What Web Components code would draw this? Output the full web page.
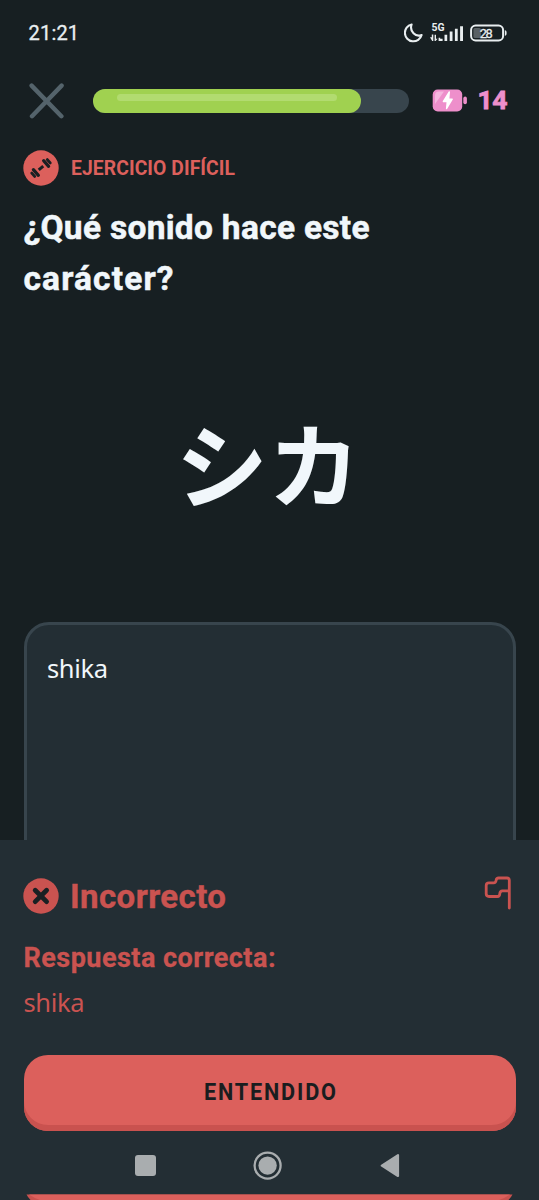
<!DOCTYPE html>
<html lang="es">
<head>
<meta charset="utf-8">
<meta name="viewport" content="width=device-width, initial-scale=1">
<title>Ejercicio</title>
<style>
    html, body {
        margin: 0;
        height: 100%;
        background: #171f22;
    }
    body {
        overflow: hidden;
        font-family: Roboto, "Noto Sans", "Noto Sans CJK JP", sans-serif;
    }
</style>
</head>
<body>
<lesson-screen>
    <status-bar slot="status" time="21:21" battery="28"></status-bar>
    <lesson-header slot="header" energy="14"></lesson-header>
    <exercise-prompt>
        <fit-text slot="tag" width="164" squeeze="0.92">EJERCICIO DIFÍCIL</fit-text>
        <fit-text slot="title" width="346">¿Qué sonido hace este</fit-text>
        <fit-text slot="title" width="150">carácter?</fit-text>
        <span slot="character">シカ</span>
    </exercise-prompt>
    <answer-box><fit-text width="61">shika</fit-text></answer-box>
    <result-sheet slot="sheet">
        <fit-text slot="heading" width="156">Incorrecto</fit-text>
        <fit-text slot="label" width="252">Respuesta correcta:</fit-text>
        <fit-text slot="answer" width="61">shika</fit-text>
        <push-button><fit-text width="132" squeeze="0.93">ENTENDIDO</fit-text></push-button>
    </result-sheet>
    <nav-bar slot="nav"></nav-bar>
</lesson-screen>

<script>
// One line of text, tracked so that it fills `width` pixels.
// `squeeze` narrows the letters themselves.
class FitText extends HTMLElement {
    constructor() {
        super();
        this.attachShadow({ mode: 'open' });
    }

    connectedCallback() {
        this.shadowRoot.innerHTML = `
            <style>
                :host { display: block; white-space: nowrap; }
                span { display: inline-block; transform-origin: 0 50%; }
            </style>
            <span><slot></slot></span>
        `;
        requestAnimationFrame(() => this.fit());
        this.fit();
    }

    fit() {
        const span = this.shadowRoot.querySelector('span');
        const squeeze = Number(this.getAttribute('squeeze')) || 1;
        const width = Number(this.getAttribute('width'));
        span.style.letterSpacing = '0px';
        span.style.marginRight = '0px';
        span.style.transform = 'none';
        const natural = span.getBoundingClientRect().width;
        const count = this.textContent.length;
        if (!natural || !count) return;
        const gap = (width / squeeze - natural) / (count - 1);
        span.style.letterSpacing = `${gap}px`;
        span.style.marginRight = `${width - width / squeeze - gap}px`;
        if (squeeze !== 1) span.style.transform = `scaleX(${squeeze})`;
    }
}

class LessonScreen extends HTMLElement {
    constructor() {
        super();
        this.attachShadow({ mode: 'open' });
    }

    connectedCallback() {
        this.shadowRoot.innerHTML = `
            <style>
                :host {
                    display: flex;
                    flex-direction: column;
                    width: 539px;
                    height: 1200px;
                    overflow: hidden;
                    color: #f1f7fb;
                    background: #171f22;
                }
                main {
                    height: 704px;
                    flex: none;
                    overflow: hidden;
                    padding: 0 23.5px;
                }
                footer {
                    flex: 1;
                    display: flex;
                    flex-direction: column;
                    background: #232e34;
                }
            </style>
            <slot name="status"></slot>
            <slot name="header"></slot>
            <main><slot></slot></main>
            <footer><slot name="sheet"></slot><slot name="nav"></slot></footer>
        `;
    }
}

class StatusBar extends HTMLElement {
    constructor() {
        super();
        this.attachShadow({ mode: 'open' });
    }

    connectedCallback() {
        this.shadowRoot.innerHTML = `
            <style>
                :host {
                    display: flex;
                    align-items: center;
                    height: 66px;
                    flex: none;
                    padding: 0 32px 0 28.5px;
                    box-sizing: border-box;
                    color: #e9eef0;
                }
                .time {
                    flex: 1;
                    font-size: 20px;
                    line-height: 24px;
                    letter-spacing: 0.2px;
                    -webkit-text-stroke: 0.3px;
                }
                svg { display: block; }
                .moon { margin-right: 7px; }
                .signal { margin-right: 6px; }
            </style>
            <span class="time">${this.getAttribute('time')}</span>
            <svg class="moon" width="19" height="20" viewBox="0 0 19 20" fill="none" stroke="currentColor" stroke-width="2.1" stroke-linejoin="round">
                <path d="M7.6 1.5A8.5 8.5 0 1 0 17.6 12C11.7 14.5 5.2 8.2 7.6 1.5Z"/>
            </svg>
            <svg class="signal" width="34" height="20" viewBox="0 0 34 20" fill="currentColor">
                <text x="1.6" y="8.4" font-size="10" font-weight="700" textLength="13" lengthAdjust="spacingAndGlyphs">5G</text>
                <path d="M0 14.2h1.8V11.5h1.5V18H2.2zM4.6 11.8h1.4v4h1.6L5.6 18h-1zM8.6 14.8h1.6v1h2.4V18h-4zM14.5 11.7h2.7V18h-2.7zM19.7 8.5h2.8V18h-2.8zM24.9 5.8h2.8V18h-2.8zM30.1 3.2H33V18h-2.9z"/>
            </svg>
            <svg width="37" height="18" viewBox="0 0 37 18">
                <rect x="3.4" y="4" width="7.5" height="10" rx="1.5" fill="#596064"/>
                <rect x="1.1" y="1.6" width="32" height="14.8" rx="4.5" fill="none" stroke="currentColor" stroke-width="2"/>
                <path d="M34.9 6.3c1.2 0 1.7.9 1.7 2.7s-.5 2.7-1.7 2.7z" fill="currentColor"/>
                <text x="16.3" y="13.6" font-size="12.8" text-anchor="middle" fill="currentColor" stroke="currentColor" stroke-width=".3" textLength="13">${this.getAttribute('battery')}</text>
            </svg>
        `;
    }
}

class LessonHeader extends HTMLElement {
    constructor() {
        super();
        this.attachShadow({ mode: 'open' });
    }

    connectedCallback() {
        this.shadowRoot.innerHTML = `
            <style>
                :host {
                    display: flex;
                    align-items: center;
                    height: 70px;
                    flex: none;
                    padding: 0 32px 0 29px;
                    box-sizing: border-box;
                }
                svg { display: block; flex: none; }
                .track {
                    width: 316px;
                    height: 23.5px;
                    margin: 0 23px 0 29px;
                    border-radius: 12px;
                    background: #38454d;
                }
                .fill {
                    width: 268px;
                    height: 100%;
                    box-sizing: border-box;
                    padding: 5px 24px 0;
                    border-radius: 12px;
                    background: #a0d150;
                }
                .shine {
                    height: 7px;
                    border-radius: 4px;
                    background: #b2db70;
                }
                .energy {
                    flex: 1;
                    text-align: right;
                    font-size: 26.5px;
                    font-weight: 700;
                    line-height: 32px;
                    padding-bottom: 2px;
                    letter-spacing: -0.5px;
                    color: #ee8fcb;
                    -webkit-text-stroke: 0.8px;
                }
            </style>
            <svg width="35" height="36" viewBox="0 0 35 36" stroke="#54636b" stroke-width="4.4" stroke-linecap="round">
                <path d="M2.6 2.6 32.4 33.2M32.6 2.6 3 33.2"/>
            </svg>
            <div class="track"><div class="fill"><div class="shine"></div></div></div>
            <svg width="36" height="24" viewBox="0 0 36 24">
                <rect x=".7" y=".5" width="29.5" height="22" rx="5" fill="#ee8fcb"/>
                <path d="M7 2.5h5L3 15V6.5a4 4 0 0 1 4-4z" fill="#f5b6de"/>
                <rect x="31.3" y="7.6" width="3.6" height="7.6" rx="1.8" fill="#ee8fcb"/>
                <path d="M16.7 2.6 10.8 12.1a.8.8 0 0 0 .7 1.2h3l-.6 6.2c-.1.9.7 1.1 1.2.4l5.7-9.3a.8.8 0 0 0-.7-1.2h-2.7L18 3c0-.9-.8-1.1-1.3-.4z" fill="#fff"/>
            </svg>
            <span class="energy">${this.getAttribute('energy')}</span>
        `;
    }
}

class ExercisePrompt extends HTMLElement {
    constructor() {
        super();
        this.attachShadow({ mode: 'open' });
    }

    connectedCallback() {
        this.shadowRoot.innerHTML = `
            <style>
                :host { display: block; height: 486px; }
                .tag {
                    display: flex;
                    align-items: center;
                    gap: 11.5px;
                    height: 64px;
                    font-size: 21px;
                    font-weight: 700;
                    line-height: 28px;
                    color: #dc605c;
                }
                .tag svg { margin-left: -0.5px; }
                .title {
                    padding-top: 2px;
                    font-size: 33.5px;
                    font-weight: 700;
                    line-height: 51px;
                    -webkit-text-stroke: 0.5px;
                }
                .character {
                    padding-top: 87px;
                    margin-left: -3px;
                    text-align: center;
                    font: 700 92.5px/140px "Noto Sans CJK JP", sans-serif;
                }
            </style>
            <div class="tag">
                <svg width="36" height="36" viewBox="0 0 36 36">
                    <circle cx="18" cy="18" r="17.7" fill="#dc605c"/>
                    <g transform="rotate(-41 18 18)" stroke="#1a2023" stroke-linecap="round">
                        <path d="M15 18h6" stroke-width="3" stroke-linecap="butt"/>
                        <path d="M11.2 14.2v7.6M24.8 14.2v7.6" stroke-width="3.2"/>
                        <path d="M7.7 15.8v4.4M28.3 15.8v4.4" stroke-width="2.9"/>
                    </g>
                </svg>
                <slot name="tag"></slot>
            </div>
            <div class="title"><slot name="title"></slot></div>
            <div class="character"><slot name="character"></slot></div>
        `;
    }
}

class AnswerBox extends HTMLElement {
    constructor() {
        super();
        this.attachShadow({ mode: 'open' });
    }

    connectedCallback() {
        this.shadowRoot.innerHTML = `
            <style>
                :host {
                    display: block;
                    box-sizing: border-box;
                    height: 300px;
                    padding: 26px 20.5px;
                    border: 3px solid #38454d;
                    border-radius: 25px;
                    background: #232e34;
                    font-family: "Noto Sans", sans-serif;
                    font-size: 25.5px;
                    line-height: 34px;
                }
            </style>
            <slot></slot>
        `;
    }
}

class ResultSheet extends HTMLElement {
    constructor() {
        super();
        this.attachShadow({ mode: 'open' });
    }

    connectedCallback() {
        this.shadowRoot.innerHTML = `
            <style>
                :host {
                    display: block;
                    box-sizing: border-box;
                    height: 291px;
                    padding: 36px 23.5px 0;
                    color: #ca5350;
                }
                .head {
                    display: flex;
                    align-items: center;
                    height: 40px;
                }
                .badge { margin-left: -0.5px; }
                .flag { margin-right: 1px; }
                .heading {
                    flex: 1;
                    padding: 2px 0 0 11px;
                    font-size: 33px;
                    font-weight: 700;
                    line-height: 40px;
                    -webkit-text-stroke: 0.4px;
                }
                .label {
                    padding-top: 24px;
                    font-size: 27px;
                    font-weight: 700;
                    line-height: 36px;
                    -webkit-text-stroke: 0.3px;
                }
                .answer {
                    padding: 8px 0 35px;
                    font-family: "Noto Sans", sans-serif;
                    font-size: 25.5px;
                    line-height: 36px;
                }
            </style>
            <div class="head">
                <svg class="badge" width="36" height="36" viewBox="0 0 36 36">
                    <circle cx="18" cy="18" r="17.7" fill="#ca5350"/>
                    <path d="M12.2 12.2 23.6 23.6M23.6 12.2 12.2 23.6" stroke="#1a2023" stroke-width="4.8" stroke-linecap="round"/>
                </svg>
                <div class="heading"><slot name="heading"></slot></div>
                <svg class="flag" width="31" height="40" viewBox="0 0 31 40" fill="none" stroke="#ca5350" stroke-width="2.8" stroke-linecap="round" stroke-linejoin="round">
                    <path d="M25.3 32V4.3Q25.3 2 23 2H14.6Q12.4 2 12.1 4.4T9.6 6.8H5Q2.2 6.8 2.2 9.6V17.8Q2.2 20.5 5 20.5H13.5Q15.7 20.5 15.8 17.7T18.4 14.8H25"/>
                </svg>
            </div>
            <div class="label"><slot name="label"></slot></div>
            <div class="answer"><slot name="answer"></slot></div>
            <slot></slot>
        `;
    }
}

class PushButton extends HTMLElement {
    constructor() {
        super();
        this.attachShadow({ mode: 'open' });
    }

    connectedCallback() {
        this.shadowRoot.innerHTML = `
            <style>
                :host {
                    display: flex;
                    justify-content: center;
                    align-items: center;
                    box-sizing: border-box;
                    height: 76px;
                    padding-bottom: 2px;
                    border-radius: 24px;
                    background: #dc605c;
                    box-shadow: inset 0 -6px #c9524f;
                    color: #1a1d1f;
                    font-size: 23.3px;
                    font-weight: 700;
                    line-height: 30px;
                }
            </style>
            <slot></slot>
        `;
    }
}

class NavBar extends HTMLElement {
    constructor() {
        super();
        this.attachShadow({ mode: 'open' });
    }

    connectedCallback() {
        this.shadowRoot.innerHTML = `
            <style>
                :host { display: flex; flex-direction: column; flex: 1; }
                .keys {
                    display: flex;
                    align-items: center;
                    justify-content: space-between;
                    height: 63px;
                    padding: 6px 139px 0 135px;
                    box-sizing: border-box;
                }
                svg { display: block; }
            </style>
            <div class="keys">
                <svg width="21" height="21"><rect width="21" height="21" rx="3" fill="#a9adaf"/></svg>
                <svg width="30" height="30" viewBox="0 0 30 30">
                    <circle cx="14.6" cy="14.6" r="13" fill="none" stroke="#a9adaf" stroke-width="2.3"/>
                    <circle cx="14.6" cy="14.6" r="9.2" fill="#a9adaf"/>
                </svg>
                <svg width="20" height="24" viewBox="0 0 20 24">
                    <path d="M1.8 11.6 18 1.2V22Z" fill="#a9adaf" stroke="#a9adaf" stroke-width="2.2" stroke-linejoin="round"/>
                </svg>
            </div>
            <svg width="539" height="6" viewBox="0 0 539 6">
                <path d="M26.5.5H512.5Q511 3.5 508.5 6H30.5Q28 3.5 26.5.5Z" fill="#c9524f"/>
                <path d="M29 .5H510Q505 4 499 6H40Q34 4 29 .5Z" fill="#dc605c"/>
            </svg>
        `;
    }
}

customElements.define('fit-text', FitText);
customElements.define('lesson-screen', LessonScreen);
customElements.define('status-bar', StatusBar);
customElements.define('lesson-header', LessonHeader);
customElements.define('exercise-prompt', ExercisePrompt);
customElements.define('answer-box', AnswerBox);
customElements.define('result-sheet', ResultSheet);
customElements.define('push-button', PushButton);
customElements.define('nav-bar', NavBar);
</script>
</body>
</html>
